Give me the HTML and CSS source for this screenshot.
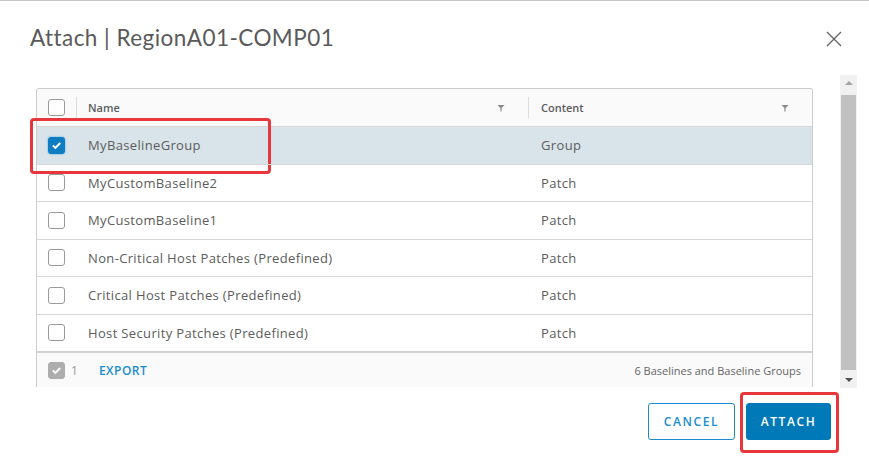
FILE: index.html
```html
<!DOCTYPE html>
<html>
<head>
<meta charset="utf-8">
<link rel="stylesheet" href="styles.css">
</head>
<body>
<div class="modal">
  <div class="modal-header">
    <h1 class="title">Attach | RegionA01-COMP01</h1>
    <svg class="close" width="16" height="16" viewBox="0 0 16 16"><path d="M1 1 L15 15 M15 1 L1 15" stroke="#666" stroke-width="1.4" fill="none"/></svg>
  </div>
  <div class="modal-body">
    <div class="grid">
      <div class="row head">
        <div class="cell sel"><span class="cb"></span></div>
        <div class="cell name"><span>Name</span><svg class="filter" width="8" height="8" viewBox="0 0 8 8"><path d="M0.5 1 H7.5 L4.6 4 V7.5 H3.4 V4 Z" fill="#888"/></svg></div>
        <div class="cell content"><span>Content</span><svg class="filter" width="8" height="8" viewBox="0 0 8 8"><path d="M0.5 1 H7.5 L4.6 4 V7.5 H3.4 V4 Z" fill="#888"/></svg></div>
      </div>
      <div class="row selected">
        <span class="highlight"></span>
        <div class="cell sel"><span class="cb checked"><svg width="11" height="9" viewBox="0 0 11 9"><path d="M1.8 4.4 L4.4 6.9 L9.2 2" stroke="#fff" stroke-width="2" fill="none"/></svg></span></div>
        <div class="cell name">MyBaselineGroup</div>
        <div class="cell content">Group</div>
      </div>
      <div class="row">
        <div class="cell sel"><span class="cb"></span></div>
        <div class="cell name">MyCustomBaseline2</div>
        <div class="cell content">Patch</div>
      </div>
      <div class="row">
        <div class="cell sel"><span class="cb"></span></div>
        <div class="cell name">MyCustomBaseline1</div>
        <div class="cell content">Patch</div>
      </div>
      <div class="row">
        <div class="cell sel"><span class="cb"></span></div>
        <div class="cell name">Non-Critical Host Patches (Predefined)</div>
        <div class="cell content">Patch</div>
      </div>
      <div class="row">
        <div class="cell sel"><span class="cb"></span></div>
        <div class="cell name">Critical Host Patches (Predefined)</div>
        <div class="cell content">Patch</div>
      </div>
      <div class="row">
        <div class="cell sel"><span class="cb"></span></div>
        <div class="cell name">Host Security Patches (Predefined)</div>
        <div class="cell content">Patch</div>
      </div>
      <div class="grid-footer">
        <span class="cb gray"><svg width="11" height="9" viewBox="0 0 11 9"><path d="M1.8 4.4 L4.4 6.9 L9.2 2" stroke="#fff" stroke-width="2" fill="none"/></svg></span>
        <span class="count">1</span>
        <span class="export">EXPORT</span>
        <span class="total">6 Baselines and Baseline Groups</span>
      </div>
    </div>
    <div class="scrollbar">
      <span class="arrow up"></span>
      <span class="thumb"></span>
      <span class="arrow down"></span>
    </div>
  </div>
  <div class="modal-footer">
    <button class="btn outline">CANCEL</button>
    <button class="btn primary">ATTACH<span class="highlight"></span></button>
  </div>
</div>
</body>
</html>
```

FILE: styles.css
```css
* { box-sizing: border-box; }
html, body { margin: 0; padding: 0; background: #fff; }
body { font-family: "Open Sans", "Lato", sans-serif; color: #5c5c5c; }

.modal {
  width: 869px;
  height: 465px;
  border-top: 1px solid #c4c4c4;
  background: #fff;
  overflow: hidden;
}

.modal-header {
  display: flex;
  align-items: center;
  justify-content: space-between;
  padding: 22px 27px 0 30px;
  height: 52px;
}
.title {
  margin: 0;
  font-family: "Lato", sans-serif;
  font-weight: 400;
  font-size: 22.5px;
  line-height: 28px;
  color: #5a5a5a;
  letter-spacing: 0.45px;
}
.close { margin-top: 2px; }

.modal-body {
  display: flex;
  align-items: flex-start;
  padding-left: 36px;
  margin-top: 22px;
}

.grid {
  width: 777px;
  margin-top: 13px;
  border: 1px solid #ccc;
  border-bottom: none;
  border-radius: 3px 3px 0 0;
}

.row {
  position: relative;
  display: flex;
  height: 37.5px;
  border-top: 1px solid #d7d7d7;
  font-size: 13px;
  letter-spacing: 0.35px;
}
.row.head {
  height: 37px;
  border-top: none;
  background: #fafafa;
  font-size: 11px;
  font-weight: 600;
  letter-spacing: 0;
  border-radius: 3px 3px 0 0;
}
.row.selected { background: #d9e4ea; }

.cell { display: flex; align-items: center; }
.cell.sel { width: 40px; padding-left: 11px; }
.head .cell.sel { border-right: 1px solid #ddd; margin: 8px 0; }
.cell.name { width: 452px; padding-left: 11px; }
.cell.content { flex: 1; padding-left: 12px; }
.head .cell.name { justify-content: space-between; padding-right: 23px; border-right: 1px solid #ddd; margin: 8px 0; }
.head .cell.content { justify-content: space-between; padding-right: 23px; }

.cb {
  display: inline-flex;
  align-items: center;
  justify-content: center;
  width: 17px;
  height: 17px;
  border: 1px solid #9a9a9a;
  border-radius: 3px;
  background: #fff;
}
.cb.checked { background: #0f7dc2; border-color: #0f7dc2; box-shadow: 0 0 2px #3fa0dd; }
.cb.gray { background: #adadad; border-color: #adadad; }

.highlight {
  position: absolute;
  left: -7px;
  top: -9px;
  width: 241px;
  height: 56px;
  border: 3px solid #e8373c;
  border-radius: 4px;
  pointer-events: none;
}

.grid-footer {
  display: flex;
  align-items: center;
  height: 36px;
  border-top: 2px solid #d2d2d2;
  background: #fafafa;
  padding-left: 11px;
  padding-right: 11px;
  font-size: 11px;
}
.count { margin-left: 6px; color: #999; font-size: 12px; }
.export {
  margin-left: 21px;
  color: #1a8ccf;
  font-size: 12px;
  font-weight: 600;
  letter-spacing: 0.5px;
}
.total { margin-left: auto; color: #666; font-size: 11px; }

.scrollbar {
  margin-left: 27px;
  width: 17px;
  height: 313px;
  background: #f1f1f1;
  display: flex;
  flex-direction: column;
  align-items: center;
}
.arrow { width: 0; height: 0; border-left: 4px solid transparent; border-right: 4px solid transparent; }
.arrow.up { border-bottom: 4px solid #a3a3a3; margin-top: 6px; }
.arrow.down { border-top: 4px solid #505050; margin-top: 8px; }
.thumb { width: 15px; height: 275px; background: #c1c1c1; margin-top: 10px; }

.modal-footer {
  display: flex;
  justify-content: flex-end;
  gap: 11px;
  padding-right: 38px;
  margin-top: 15px;
}
.btn {
  position: relative;
  height: 37px;
  border-radius: 3px;
  font-family: "Open Sans", sans-serif;
  font-size: 12px;
  font-weight: 600;
  letter-spacing: 1.6px;
  cursor: pointer;
  padding: 0;
}
.btn.outline {
  width: 87px;
  background: #fff;
  border: 1px solid #1a8ccf;
  color: #1a8ccf;
}
.btn.primary {
  width: 85px;
  background: #0079b8;
  border: 1px solid #0079b8;
  color: #fff;
}
.btn .highlight {
  left: -7px;
  top: -12px;
  width: 99px;
  height: 61px;
}
```
